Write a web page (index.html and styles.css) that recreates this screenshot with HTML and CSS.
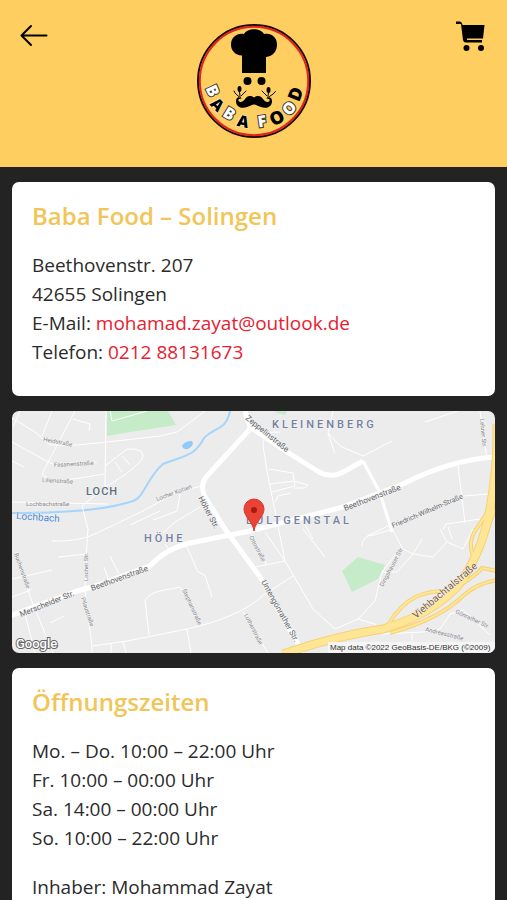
FILE: index.html
```
<!DOCTYPE html>
<html lang="de">
<head>
    <meta charset="UTF-8">
    <meta name="viewport" content="width=device-width, initial-scale=1.0">
    <title>Baba Food – Solingen</title>
    <link rel="stylesheet" href="styles.css">
</head>
<body>
    <header class="header">
        <button class="icon-button" aria-label="Zurück">
            <svg class="icon" viewBox="0 0 32 32" fill="none" stroke="currentColor" stroke-width="2" stroke-linecap="round" stroke-linejoin="round">
                <path d="M26.500 15.500H1.500M11 6L1.500 15.500L11 25"/>
            </svg>
        </button>
        <a class="logo" href="#" aria-label="Baba Food">
            <svg viewBox="0 0 116 116">
                <circle cx="58" cy="58" r="56" fill="none" stroke="#1a0a06" stroke-width="2"/>
                <circle cx="58" cy="58" r="54.200" fill="none" stroke="#e2231a" stroke-width="2"/>
                <path d="M46 50V32.500C39 32 35 27.500 35 21.500C35 14 41.500 9.500 48 11C51 4.500 65 4.500 68 11C75 9.500 81 14 81 21.500C81 28 77 33.500 70 34V50Z"/>
                <circle cx="51.500" cy="58" r="4"/>
                <circle cx="65.500" cy="58" r="4"/>
                <path d="M58 74.500C54 72 51 73 49 76C47 79 44 80 42.500 78C42 76.500 43.500 75.500 45 76.500C44 72.500 39.500 74 40 79C40.500 84 46 86 51 84C54 83 56 81.500 58 81.500C60 81.500 62 83 65 84C70 86 75.500 84 76 79C76.500 74 72 72.500 71 76.500C72.500 75.500 74 76.500 73.500 78C72 80 69 79 67 76C65 73 62 72 58 74.500Z"/>
                <g fill="none" stroke="#000" stroke-linecap="round">
                    <path d="M45 75C42 73 39 71 38 68M44 73L43 65M45 73L50 68M71 75C74 73 78 71 79.500 68.500M72 73L73 66M71 73L66 68"/>
                </g>
                <ellipse cx="43.500" cy="66" rx="2" ry="3"/>
                <ellipse cx="72.500" cy="67" rx="2" ry="3"/>
                <g class="logo-letters">
                    <text class="light" transform="translate(16 68) rotate(65)" y="5">B</text>
                    <text transform="translate(21 82) rotate(45)" y="5">A</text>
                    <text class="light" transform="translate(33 91) rotate(32)" y="5">B</text>
                    <text transform="translate(47 99) rotate(12)" y="5">A</text>
                    <text class="light" transform="translate(66 99) rotate(-8)" y="5">F</text>
                    <text class="dark" transform="translate(81 95) rotate(-28)" y="6">O</text>
                    <text class="light" transform="translate(93 85) rotate(-47)" y="6">O</text>
                    <text class="dark" transform="translate(100 71) rotate(-68)" y="6">D</text>
                </g>
            </svg>
        </a>
        <button class="icon-button" aria-label="Warenkorb">
            <svg class="icon" viewBox="0 0 32 32">
                <path d="M1 1.500H4.500Q6.500 1.500 7 3.500L7.500 5H29.500L28 18.500H12V20H27V22.500H11Q8.500 22.500 8 20L6 4H1Z"/>
                <circle cx="11.500" cy="28" r="3"/>
                <circle cx="26" cy="28" r="3"/>
            </svg>
        </button>
    </header>

    <main class="container">
        <section class="card">
            <h2>Baba Food – Solingen</h2>
            <p>
                Beethovenstr. 207<br>
                42655 Solingen<br>
                E-Mail: <a href="mailto:mohamad.zayat@outlook.de">mohamad.zayat@outlook.de</a><br>
                Telefon: <a href="tel:+4921288131673">0212 88131673</a>
            </p>
        </section>

        <section class="map">
            <svg viewBox="12 412 483 242" role="img" aria-label="Karte">
                <rect x="12" y="412" width="483" height="242" fill="#ececed"/>

                <!-- parks and water -->
                <g fill="#c5ebc9">
                    <path d="M107 412H168L176 426L130 433L107 437Z"/>
                    <path d="M342 572L358 558L385 566L378 580L352 593Z"/>
                    <path d="M275 412H287L285 416L277 414Z"/>
                </g>
                <path d="M230 412C226 432 214 428 204 439C194 458 185 456 163 465C148 477 144 499 133 502C110 510 75 514 12 514" fill="none" stroke="#a5d5fb" stroke-width="2"/>
                <path d="M182 447Q184 442 192 442Q195 446 188 450Q184 451 182 447Z" fill="#8fcafb"/>

                <!-- small streets -->
                <g class="street">
                    <path d="M12 419L35 433L50 446H77L107 443L160 437L177 433L205 412"/>
                    <path d="M106 412L105 488L82 507L88 530L86 560L85 590L87 610L92 647V654"/>
                    <path d="M110 412L112 422L147 412M52 412L42 437M13 428L20 412"/>
                    <path d="M12 443L52 465L97 463M75 412L42 475L53 483L105 475M73 420L90 425L89 432M12 462L24 468"/>
                    <path d="M105 467L127 450Q143 449 143 457Q140 468 105 488M115 463L122 473M122 457L130 466M12 503L108 505"/>
                    <path d="M202 487L177 493L143 512L97 534Q80 543 52 542M180 495L177 512L153 521M200 508L175 523L163 534M160 512L130 526"/>
                    <path d="M58 558L86 555M12 580L52 571M12 598L31 591M16 553L31 600L53 654M25 615L35 654M50 624L64 617M110 557L119 575M104 568L109 582"/>
                    <path d="M187 548L198 573L205 576L212 598M165 545L170 552M93 647L127 642L187 630Q240 618 262 597L293 577M187 630L191 654M123 642L126 654M111 645V654"/>
                    <path d="M149 636L145 601Q150 594 160 592L180 588L202 626M243 613L268 654"/>
                    <path d="M280 433Q263 431 263 447L267 472L275 512L285 562L313 610L335 630L358 620L375 602L382 573L400 550"/>
                    <path d="M265 533L285 562M252 535L266 565M255 568L285 562M269 470L293 474L295 487L272 493M270 485L294 482L308 486L305 489H294M275 503L278 497L291 494"/>
                    <path d="M303 530L325 558M305 526L313 540M333 412L328 434L335 455M328 434L340 447L363 457L392 442M425 423L458 412"/>
                    <path d="M362 547Q362 537 373 536L393 530M392 530L403 550L413 555L433 558L447 543L463 550L473 530M383 573L397 573L413 555L422 540M447 543L440 530"/>
                    <path d="M367 537L392 525L463 497L488 495M458 467L465 524M443 531L446 525L480 520M448 528L452 540"/>
                    <path d="M358 620L375 625L382 635L423 633L440 630L450 615L463 611L490 636M412 635V642M480 412L487 460"/>
                </g>

                <!-- main roads -->
                <g class="road">
                    <path d="M245 412L250 428L287 453L319 473Q332 480 345 472L363 462"/>
                    <path class="narrow" d="M363 462L380 494L392 533"/>
                    <path d="M250 430L207 477Q200 485 204 496L225 530L260 578L303 654"/>
                    <path d="M10 617L77 592L92 588L150 567Q165 550 190 544L250 532L343 508L403 485Q450 461 495 458"/>
                </g>

                <!-- motorway -->
                <g class="motorway-edge">
                    <path class="wide" d="M283 655Q335 637 383 630Q430 616 457 588Q482 555 490 510T497 425"/>
                    <path d="M388 626C405 597 425 591 450 592Q475 578 482 569L497 572M390 634Q440 620 464 596Q478 584 497 581M475 562Q466 543 477 529L493 505M495 510L487 532"/>
                </g>
                <g class="motorway">
                    <path class="wide" d="M283 655Q335 637 383 630Q430 616 457 588Q482 555 490 510T497 425"/>
                    <path d="M388 626C405 597 425 591 450 592Q475 578 482 569L497 572M390 634Q440 620 464 596Q478 584 497 581M475 562Q466 543 477 529L493 505M495 510L487 532"/>
                </g>

                <g class="label-small">
                    <text transform="translate(43 442) rotate(11)">Heidstraße</text>
                    <text transform="translate(54 468) rotate(-3)">Fasanenstraße</text>
                    <text transform="translate(42 483) rotate(3)">Lilienstraße</text>
                    <text transform="translate(26 507)">Lochbachstraße</text>
                    <text transform="translate(157 502) rotate(-20)">Locher Kotten</text>
                    <text transform="translate(88 582) rotate(-90)">Locher Str.</text>
                    <text transform="translate(81 599) rotate(72)">Pilaustraße</text>
                    <text transform="translate(14 555) rotate(70)">Buchenstraße</text>
                    <text transform="translate(182 591) rotate(65)">Stephanstraße</text>
                    <text transform="translate(244 616) rotate(63)">Lutherstraße</text>
                    <text transform="translate(249 538) rotate(62)">Ottostraße</text>
                    <text transform="translate(383 588) rotate(-62)">Dingshauser Str.</text>
                    <text transform="translate(480 420) rotate(85)">Lehner Str.</text>
                    <text transform="translate(455 614) rotate(25)">Gönrather Str.</text>
                    <text transform="translate(425 632) rotate(14)">Andreasstraße</text>
                </g>
                <g class="label-street">
                    <text class="mid" transform="translate(393 529) rotate(-23)">Friedrich-Wilhelm-Straße</text>
                    <text transform="translate(245 420) rotate(39)">Zeppelinstraße</text>
                    <text transform="translate(198 499) rotate(62)">Höher Str.</text>
                    <text transform="translate(345 512) rotate(-21)">Beethovenstraße</text>
                    <text transform="translate(92 592) rotate(-20)">Beethovenstraße</text>
                    <text transform="translate(21 618) rotate(-22)">Merscheider Str.</text>
                    <text transform="translate(261 583) rotate(61)">Untengönrather Str.</text>
                    <text class="highway" transform="translate(416 620) rotate(-40)">Viehbachtalstraße</text>
                    <text class="river" transform="translate(16 520) rotate(4)">Lochbach</text>
                </g>
                <g class="label-district">
                    <text x="272" y="429">KLEINENBERG</text>
                    <text x="246" y="525">BÜLTGENSTAL</text>
                    <text x="144" y="543">HÖHE</text>
                    <text class="narrow" x="86" y="496">LOCH</text>
                </g>

                <path d="M254 532C253 523 244 518 244 510A10 10 0 0 1 264 510C264 518 255 523 254 532Z" fill="#ea4335" stroke="#d23a2e"/>
                <circle cx="254" cy="511" r="3" fill="#a31a12"/>

                <rect x="328" y="643" width="167" height="11" fill="#f5f5f5"/>
                <text class="credits" x="330" y="651">Map data ©2022 GeoBasis-DE/BKG (©2009)</text>
                <text class="google" x="16" y="649">Google</text>
            </svg>
        </section>

        <section class="card">
            <h2>Öffnungszeiten</h2>
            <p>
                Mo. – Do. 10:00 – 22:00 Uhr<br>
                Fr. 10:00 – 00:00 Uhr<br>
                Sa. 14:00 – 00:00 Uhr<br>
                So. 10:00 – 22:00 Uhr
            </p>
            <p>Inhaber: Mohammad Zayat</p>
        </section>
    </main>
</body>
</html>
```
FILE: styles.css
```
:root {
    --primary-color: #ffce60;
    --heading-color: #f1c557;
    --link-color: #e9202f;
    --background-color: #232323;
    --card-background: #ffffff;
    --text-color: #2b2b2b;
}

* {
    margin: 0;
    padding: 0;
    box-sizing: border-box;
}

body {
    font-family: "Open Sans", sans-serif;
    font-size: 19px;
    line-height: 29px;
    background-color: var(--background-color);
    color: var(--text-color);
}

.header {
    display: flex;
    justify-content: space-between;
    align-items: flex-start;
    background-color: var(--primary-color);
    padding: 20px 20px 28px;
}

.icon-button {
    background: none;
    border: none;
    color: #000;
    cursor: pointer;
}

.icon {
    display: block;
    width: 32px;
    height: 32px;
}

.logo {
    width: 116px;
    margin-top: 3px;
}

.logo svg,
.map svg {
    display: block;
    width: 100%;
}

.logo-letters text {
    font-family: "Open Sans", sans-serif;
    font-size: 16px;
    font-weight: 800;
    text-anchor: middle;
    fill: #000;
    stroke: #fff;
    stroke-width: 1px;
    paint-order: stroke;
}

.logo-letters .light {
    fill: #fff;
    stroke: #333;
    stroke-width: 2px;
}

.logo-letters .dark {
    font-size: 18px;
    stroke: none;
}

.container {
    display: flex;
    flex-direction: column;
    gap: 15px;
    padding: 15px 12px;
}

.card {
    background: var(--card-background);
    border-radius: 7px;
    padding: 20px 20px 9px;
}

.card h2 {
    font-size: 24px;
    font-weight: 600;
    line-height: 28px;
    color: var(--heading-color);
    margin-bottom: 21px;
}

.card p {
    margin-bottom: 20px;
}

.card a {
    color: var(--link-color);
    text-decoration: none;
}

.map {
    border-radius: 7px;
    overflow: hidden;
}

.map text {
    font-family: Roboto, sans-serif;
    stroke: #f4f4f4;
    stroke-width: 1px;
    paint-order: stroke;
}

.street {
    fill: none;
    stroke: #fff;
    stroke-width: 1px;
}

.road {
    fill: none;
    stroke: #fff;
    stroke-width: 5px;
    stroke-linejoin: round;
}

.road .narrow {
    stroke-width: 3px;
}

.motorway-edge {
    fill: none;
    stroke: #f6d175;
    stroke-width: 4px;
}

.motorway-edge .wide {
    stroke-width: 9px;
}

.motorway {
    fill: none;
    stroke: #ffe694;
    stroke-width: 2px;
}

.motorway .wide {
    stroke-width: 7px;
}

.label-small {
    font-size: 6px;
    fill: #85888c;
}

.label-street {
    font-size: 8px;
    fill: #626569;
}

.label-street .mid {
    font-size: 7px;
}

.label-street .highway {
    font-size: 10px;
    fill: #7a5a3a;
}

.label-street .river {
    font-size: 10px;
    fill: #4a86cf;
}

.label-district {
    font-size: 11px;
    font-weight: 500;
    letter-spacing: 3px;
    fill: #7580a0;
}

.label-district .narrow {
    letter-spacing: 1px;
    fill: #626b78;
}

.map .credits {
    font-family: "Liberation Sans", sans-serif;
    font-size: 8px;
    fill: #333;
    stroke: none;
}

.map .google {
    font-size: 13px;
    font-weight: 500;
    fill: #fff;
    stroke: #666;
    stroke-width: 2px;
}
```
